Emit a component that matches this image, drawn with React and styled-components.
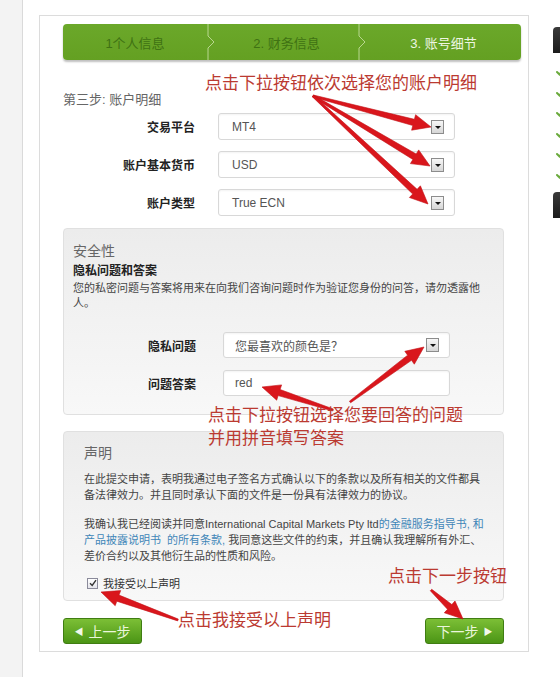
import React from "react";
import styled, { createGlobalStyle } from "styled-components";

const sans = `"Liberation Sans", "Noto Sans CJK SC", sans-serif`;

const GlobalStyle = createGlobalStyle`
  html, body {
    margin: 0;
    padding: 0;
    background: #ffffff;
    overflow: hidden;
  }
  body {
    font-family: ${sans};
    color: #333;
  }
`;

const accountFields = [
  { label: "交易平台", value: "MT4" },
  { label: "账户基本货币", value: "USD" },
  { label: "账户类型", value: "True ECN" },
];

const arrows = [
  [[313, 96], [431, 127]],
  [[313, 96], [430, 166]],
  [[313, 96], [428, 204]],
  [[350, 402], [424, 347]],
  [[333, 410], [262, 387]],
  [[178, 620], [101, 592]],
  [[431, 590], [463, 619]],
];

const notes = [
  { x: 205, y: 71, text: "点击下拉按钮依次选择您的账户明细" },
  { x: 208, y: 403, text: "点击下拉按钮选择您要回答的问题" },
  { x: 208, y: 426, text: "并用拼音填写答案" },
  { x: 388, y: 564, text: "点击下一步按钮" },
  { x: 178, y: 608, text: "点击我接受以上声明" },
];

const arrowPoints = ([x1, y1], [x2, y2]) => {
  const dx = x2 - x1;
  const dy = y2 - y1;
  const len = Math.hypot(dx, dy);
  const ux = dx / len;
  const uy = dy / len;
  const nx = -uy;
  const ny = ux;
  const head = 18;
  const wing = 8;
  const tail = 1;
  const neck = 3.2;
  const bx = x2 - ux * head;
  const by = y2 - uy * head;
  const p = (x, y) => `${x.toFixed(1)},${y.toFixed(1)}`;
  return [
    p(x1 + nx * tail, y1 + ny * tail),
    p(bx + nx * neck, by + ny * neck),
    p(bx + nx * wing, by + ny * wing),
    p(x2, y2),
    p(bx - nx * wing, by - ny * wing),
    p(bx - nx * neck, by - ny * neck),
    p(x1 - nx * tail, y1 - ny * tail),
  ].join(" ");
};

const Dropdown = ({ value, pad }) => (
  <SelectBox $pad={pad}>
    <span>{value}</span>
    <DropButton />
  </SelectBox>
);

const StepDivider = () => (
  <svg width="8" height="36" viewBox="0 0 8 36">
    <path d="M1 0 V12 L7 18 L1 24 V36" fill="none" stroke="#b9d78f" strokeWidth="1" />
  </svg>
);

const Tick = () => (
  <svg width="10" height="9" viewBox="0 0 10 9">
    <path d="M1 5 L3.5 7.5 L9 1" fill="none" stroke="#6aaa3c" strokeWidth="2" strokeLinecap="round" />
  </svg>
);

const App = () => {
  return (
    <>
      <GlobalStyle />
      <Page>
        <LeftRail />
        <Card>
          <StepBar>
            <Step $w="144px">1个人信息</Step>
            <StepDivider />
            <Step $w="143px">2. 财务信息</Step>
            <StepDivider />
            <Step $active>3. 账号细节</Step>
          </StepBar>

          <StepTitle>第三步: 账户明细</StepTitle>

          <FieldList>
            {accountFields.map((f) => (
              <FieldRow key={f.label}>
                <FieldLabel>{f.label}</FieldLabel>
                <Dropdown value={f.value} />
              </FieldRow>
            ))}
          </FieldList>

          <Panel $pad="12px 9px 18px 9px">
            <PanelTitle>安全性</PanelTitle>
            <PanelSubtitle>隐私问题和答案</PanelSubtitle>
            <SmallText $lh="15px">
              您的私密问题与答案将用来在向我们咨询问题时作为验证您身份的问答，请勿透露他
              <br />
              人。
            </SmallText>
            <QuestionList>
              <QuestionRow>
                <FieldLabel>隐私问题</FieldLabel>
                <Dropdown value="您最喜欢的颜色是？" pad="11px" />
              </QuestionRow>
              <QuestionRow>
                <FieldLabel>问题答案</FieldLabel>
                <TextInput>red</TextInput>
              </QuestionRow>
            </QuestionList>
          </Panel>

          <Panel $pad="11px 20px 9px 20px" $gap="16px">
            <PanelTitle>声明</PanelTitle>
            <SmallText $top="8px">
              在此提交申请，表明我通过电子签名方式确认以下的条款以及所有相关的文件都具
              <br />
              备法律效力。并且同时承认下面的文件是一份具有法律效力的协议。
            </SmallText>
            <SmallText $top="13px">
              我确认我已经阅读并同意International Capital Markets Pty ltd
              <DocLink>的金融服务指导书, 和</DocLink>
              <br />
              <DocLink>产品披露说明书&nbsp;&nbsp;的所有条款,</DocLink> 我同意这些文件的约束，并且确认我理解所有外汇、
              <br />
              差价合约以及其他衍生品的性质和风险。
            </SmallText>
            <AgreeRow>
              <CheckBox>
                <svg width="8" height="8" viewBox="0 0 8 8">
                  <path d="M1 4.2 L3.2 6.4 L7 1.2" fill="none" stroke="#333" strokeWidth="1.4" />
                </svg>
              </CheckBox>
              我接受以上声明
            </AgreeRow>
          </Panel>

          <ButtonBar>
            <NavButton>
              <ButtonArrow>◀</ButtonArrow>上一步
            </NavButton>
            <NavButton>
              下一步<ButtonArrow>▶</ButtonArrow>
            </NavButton>
          </ButtonBar>
        </Card>

        <SideBar>
          <DarkTab />
          <CheckList>
            {[0, 1, 2, 3, 4, 5].map((i) => (
              <Tick key={i} />
            ))}
          </CheckList>
          <DarkTab />
        </SideBar>

        <Annotations>
          <svg width="560" height="677" viewBox="0 0 560 677">
            {arrows.map(([from, to], i) => (
              <polygon key={i} points={arrowPoints(from, to)} fill="#d9161c" stroke="#c21016" strokeWidth="0.6" />
            ))}
          </svg>
          {notes.map((n) => (
            <Note key={n.text} style={{ left: n.x, top: n.y }}>
              {n.text}
            </Note>
          ))}
        </Annotations>
      </Page>
    </>
  );
};

const Page = styled.div`
  position: relative;
  display: flex;
  align-items: flex-start;
  width: 560px;
  height: 677px;
  overflow: hidden;
  background: #ffffff;
`;

const LeftRail = styled.div`
  flex: 0 0 22px;
  align-self: stretch;
  background: #f3f3f3;
  border-right: 1px solid #dadada;
`;

const Card = styled.div`
  flex: 0 0 490px;
  box-sizing: border-box;
  margin: 15px 0 0 16px;
  padding: 8px 7px 7px 23px;
  border: 1px solid #dcdcdc;
  background: #fff;
  display: flex;
  flex-direction: column;
`;

const StepBar = styled.div`
  display: flex;
  height: 36px;
  border-radius: 4px;
  background: linear-gradient(#6ba82a, #64a022);
  box-shadow: 0 2px 2px rgba(0, 0, 0, 0.25);
  overflow: hidden;
`;

const Step = styled.div`
  flex: ${(p) => (p.$w ? `0 0 ${p.$w}` : "1")};
  display: flex;
  align-items: center;
  justify-content: center;
  font-size: 13px;
  color: ${(p) => (p.$active ? "#eef6e2" : "#3f7213")};
`;

const StepTitle = styled.div`
  margin-top: 31px;
  font-size: 13px;
  line-height: 18px;
  color: #666;
`;

const FieldList = styled.div`
  display: flex;
  flex-direction: column;
  gap: 11px;
  margin-top: 4px;
  width: 392px;
`;

const FieldRow = styled.div`
  display: grid;
  grid-template-columns: 132px 237px;
  column-gap: 23px;
  align-items: center;
  height: 27px;
`;

const FieldLabel = styled.div`
  text-align: right;
  font-size: 12px;
  font-weight: bold;
  color: #222;
`;

const SelectBox = styled.div`
  box-sizing: border-box;
  height: 100%;
  display: flex;
  align-items: center;
  justify-content: space-between;
  padding: 0 10px 0 ${(p) => p.$pad || "13px"};
  border: 1px solid #d8d8d8;
  border-radius: 3px;
  background: #fff;
  box-shadow: inset 0 1px 2px rgba(0, 0, 0, 0.05);
  font-size: 12px;
  color: #555;
`;

const DropButton = styled.span`
  position: relative;
  box-sizing: border-box;
  width: 13px;
  height: 14px;
  border: 1px solid #8c8c8c;
  background: linear-gradient(#f7f7f7, #d6d6d6);

  &::after {
    content: "";
    position: absolute;
    left: 3px;
    top: 5px;
    border-left: 3px solid transparent;
    border-right: 3px solid transparent;
    border-top: 3px solid #111;
  }
`;

const TextInput = styled.div`
  box-sizing: border-box;
  height: 100%;
  display: flex;
  align-items: center;
  padding-left: 11px;
  border: 1px solid #d8d8d8;
  border-radius: 3px;
  background: #fff;
  box-shadow: inset 0 1px 2px rgba(0, 0, 0, 0.05);
  font-size: 12px;
  color: #555;
`;

const Panel = styled.div`
  box-sizing: border-box;
  width: 441px;
  margin-top: ${(p) => p.$gap || "12px"};
  padding: ${(p) => p.$pad};
  border: 1px solid #e0e0e0;
  border-radius: 4px;
  background: linear-gradient(#ececec, #f8f8f8);
`;

const PanelTitle = styled.div`
  font-size: 14px;
  line-height: 20px;
  color: #666;
`;

const PanelSubtitle = styled.div`
  margin-top: 1px;
  font-size: 12px;
  line-height: 18px;
  font-weight: bold;
  color: #222;
`;

const SmallText = styled.p`
  margin: ${(p) => p.$top || "1px"} 0 0;
  font-size: 11px;
  line-height: ${(p) => p.$lh || "16px"};
  color: #444;
  white-space: nowrap;
`;

const DocLink = styled.span`
  color: #3f86b8;
`;

const QuestionList = styled.div`
  display: flex;
  flex-direction: column;
  gap: 12px;
  margin-top: 21px;
`;

const QuestionRow = styled.div`
  display: grid;
  grid-template-columns: 123px 227px;
  column-gap: 27px;
  align-items: center;
  height: 26px;
`;

const AgreeRow = styled.label`
  display: flex;
  align-items: center;
  gap: 5px;
  height: 16px;
  margin: 11px 0 0 3px;
  font-size: 11px;
  color: #333;
`;

const CheckBox = styled.span`
  box-sizing: border-box;
  width: 11px;
  height: 11px;
  display: flex;
  align-items: center;
  justify-content: center;
  border: 1px solid #8a8a9a;
  background: linear-gradient(#fff, #e4e4ea);
`;

const ButtonBar = styled.div`
  display: flex;
  justify-content: space-between;
  width: 441px;
  margin-top: 17px;
`;

const NavButton = styled.button`
  box-sizing: border-box;
  width: 79px;
  height: 26px;
  display: flex;
  align-items: center;
  justify-content: center;
  gap: 5px;
  padding: 0;
  border: 1px solid #3f7d12;
  border-radius: 3px;
  background: linear-gradient(#7cbf36, #4b9515);
  color: #eaf6dc;
  font-family: ${sans};
  font-size: 14px;
`;

const ButtonArrow = styled.span`
  font-size: 9px;
  color: #f2f9ea;
`;

const SideBar = styled.div`
  flex: 0 0 20px;
  margin: 27px 0 0 24px;
  display: flex;
  flex-direction: column;
  align-items: flex-start;
`;

const DarkTab = styled.div`
  width: 20px;
  height: 26px;
  border-radius: 4px 0 0 0;
  background: linear-gradient(#3a3a3a, #1c1c1c);
`;

const CheckList = styled.div`
  display: flex;
  flex-direction: column;
  gap: 11.6px;
  margin: 14px 0 13px 3px;
`;

const Annotations = styled.div`
  position: absolute;
  inset: 0;
  pointer-events: none;

  svg {
    position: absolute;
    left: 0;
    top: 0;
  }
`;

const Note = styled.span`
  position: absolute;
  font-family: "Noto Sans CJK SC", sans-serif;
  font-size: 17px;
  line-height: 22px;
  color: #bb3a31;
  white-space: nowrap;
`;

export default App;
